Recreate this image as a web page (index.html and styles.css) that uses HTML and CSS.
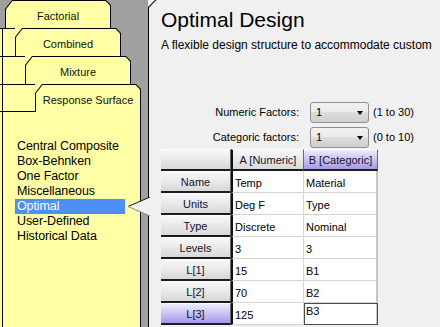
FILE: index.html
```html
<!DOCTYPE html>
<html lang="en">
<head>
    <meta charset="UTF-8">
    <title>Optimal Design</title>
    <link rel="stylesheet" href="styles.css">
</head>
<body>
    <div class="window">
        <aside class="sidebar">
            <div class="tab-row row-1">
                <div class="tab"><div class="tab-face">Factorial</div></div>
            </div>
            <div class="tab-row row-2">
                <div class="strip"></div>
                <div class="tab"><div class="tab-face">Combined</div></div>
            </div>
            <div class="tab-row row-3">
                <div class="strip"></div>
                <div class="tab"><div class="tab-face">Mixture</div></div>
            </div>
            <div class="tab-row row-4">
                <div class="strip"></div>
                <div class="tab"><div class="tab-face">Response Surface</div></div>
            </div>
            <div class="panel">
                <ul class="design-list">
                    <li>Central Composite</li>
                    <li>Box-Behnken</li>
                    <li>One Factor</li>
                    <li>Miscellaneous</li>
                    <li class="selected">Optimal</li>
                    <li>User-Defined</li>
                    <li>Historical Data</li>
                </ul>
            </div>
        </aside>

        <main class="content">
            <div class="content-inner">
                <h1 class="title">Optimal Design</h1>
                <p class="subtitle">A flexible design structure to accommodate custom</p>

                <div class="factors">
                    <div class="factor-row">
                        <span class="factor-label">Numeric Factors:</span>
                        <div class="select"><span>1</span><span class="caret"></span></div>
                        <span class="range">(1 to 30)</span>
                    </div>
                    <div class="factor-row">
                        <span class="factor-label">Categoric factors:</span>
                        <div class="select"><span>1</span><span class="caret"></span></div>
                        <span class="range">(0 to 10)</span>
                    </div>
                </div>

                <div class="grid">
                    <div class="hd"></div>
                    <div class="hd col-a">A [Numeric]</div>
                    <div class="hd on">B [Categoric]</div>

                    <div class="hd">Name</div>
                    <div class="cell col-a">Temp</div>
                    <div class="cell col-b">Material</div>

                    <div class="hd">Units</div>
                    <div class="cell col-a">Deg F</div>
                    <div class="cell col-b">Type</div>

                    <div class="hd">Type</div>
                    <div class="cell col-a">Discrete</div>
                    <div class="cell col-b">Nominal</div>

                    <div class="hd">Levels</div>
                    <div class="cell col-a">3</div>
                    <div class="cell col-b">3</div>

                    <div class="hd">L[1]</div>
                    <div class="cell col-a">15</div>
                    <div class="cell col-b">B1</div>

                    <div class="hd">L[2]</div>
                    <div class="cell col-a">70</div>
                    <div class="cell col-b">B2</div>

                    <div class="hd on">L[3]</div>
                    <div class="cell col-a">125</div>
                    <div class="cell col-b editing">B3</div>
                </div>
            </div>
        </main>

        <svg class="pointer" width="23" height="19" viewBox="0 0 23 19">
            <polygon points="1,9.5 23,0 23,19" fill="#f0f0f0"/>
            <line x1="1" y1="9.5" x2="23" y2="0" stroke="#1a1a1a"/>
            <line x1="1" y1="9.5" x2="23" y2="19" stroke="#8a8a8a"/>
        </svg>
    </div>
</body>
</html>
```

FILE: styles.css
```css
body { margin: 0; font-family: "Liberation Sans", Arial, sans-serif; background: #f0f0f0; color: #000; }

.window {
    position: relative;
    display: flex;
    width: 440px;
    height: 327px;
    overflow: hidden;
}

/* left side: stacked tabs + design list */
.sidebar {
    width: 148px;
    flex-shrink: 0;
    background: #a0a0a0;
    display: flex;
    flex-direction: column;
}
.tab-row { display: flex; height: 28px; flex-shrink: 0; }
.row-1 { padding-left: 5px; }
.row-2 { background: linear-gradient(to right, #ffffa6 111px, transparent 111px); }
.row-3 { background: linear-gradient(to right, #ffffa6 121px, transparent 121px); }
.row-4 { background: linear-gradient(to right, #ffffa6 131px, transparent 131px); }

.strip {
    flex-shrink: 0;
    box-sizing: border-box;
    border-top: 1px solid #000;
    background: linear-gradient(to right, #ffffa6 2px, #000 2px, #000 3px, #ffffa6 3px);
}
.row-2 .strip { width: 15px; }
.row-3 .strip { width: 25px; }
.row-4 .strip { width: 35px; border-bottom: 1px solid #000; }

.tab {
    width: 106px;
    flex-shrink: 0;
    background: #000;
    clip-path: polygon(7px 0, calc(100% - 5px) 0, 100% 5px, 100% 100%, 0 100%, 0 9px);
}
.tab-face {
    margin: 1px 1px 0;
    height: 27px;
    box-sizing: border-box;
    padding-top: 9px;
    background: #ffffa6;
    clip-path: polygon(6.5px 0, calc(100% - 4.4px) 0, 100% 4.4px, 100% 100%, 0 100%, 0 8.3px);
    text-align: center;
    font-size: 11px;
    line-height: 13px;
    color: #111;
    white-space: nowrap;
}

.panel {
    flex: 1;
    width: 141px;
    box-sizing: border-box;
    border-right: 1px solid #000;
    background: linear-gradient(to right, #ffffa6 2px, #000 2px, #000 3px, #ffffa6 3px);
    padding-top: 27px;
}
.design-list {
    list-style: none;
    margin: 0;
    padding: 0 0 0 15px;
    font-size: 12.5px;
    line-height: 15px;
    letter-spacing: -0.1px;
}
.design-list li { width: 110px; padding-left: 2px; box-sizing: border-box; white-space: nowrap; }
.design-list li.selected { background: #4d8ff5; color: #fff; }

/* right side */
.content {
    flex: 1;
    background: #000;
    clip-path: polygon(7px 0, 100% 0, 100% 100%, 0 100%, 0 7px);
}
.content-inner {
    margin-left: 1px;
    height: 100%;
    box-sizing: border-box;
    padding: 8px 0 0 12px;
    background: #f0f0f0;
    clip-path: polygon(7.4px 0, 100% 0, 100% 100%, 0 100%, 0 7.4px);
    overflow: hidden;
}
.title { margin: 0; font-size: 21px; line-height: 24px; font-weight: normal; }
.subtitle { margin: 6px 0 0; font-size: 12px; line-height: 14px; white-space: nowrap; }

.factors { margin-top: 50px; font-size: 11px; line-height: 13px; }
.factor-row { display: flex; align-items: center; height: 21px; }
.factor-row + .factor-row { margin-top: 4px; }
.factor-label { width: 138px; text-align: right; }
.select {
    margin-left: 11px;
    width: 59px;
    height: 21px;
    box-sizing: border-box;
    border: 1px solid #8e8f8f;
    border-radius: 3px;
    background: linear-gradient(#f2f2f2, #ebebeb 50%, #dddddd 50%, #cfcfcf);
    display: flex;
    align-items: center;
    justify-content: space-between;
    padding: 0 5px 0 5px;
}
.caret { border-left: 3.5px solid transparent; border-right: 3.5px solid transparent; border-top: 4px solid #000; }
.range { margin-left: 4px; }

.grid {
    margin-top: 1px;
    display: grid;
    grid-template-columns: 70px 73px 74px;
    grid-auto-rows: 22px;
    font-size: 11px;
    line-height: 13px;
}
.hd {
    display: flex;
    align-items: center;
    justify-content: center;
    box-sizing: border-box;
    padding-top: 1px;
    background: linear-gradient(#f8f8f8, #e9e9e9 50%, #d8d8d8);
    border-top: 1px solid #fdfdfd;
    border-right: 1px solid #6a6a6a;
    border-bottom: 2px solid #1c1c1c;
    color: #14142a;
    white-space: nowrap;
}
.hd.on { background: linear-gradient(#eeecfc, #c9c3f3 50%, #a39ae7); }
.col-a { border-left: 2px solid #111; }
.cell {
    box-sizing: border-box;
    background: #fff;
    border-right: 1px solid #d4d4d4;
    border-bottom: 1px solid #d4d4d4;
    padding: 6px 0 0 2px;
    white-space: nowrap;
}
.cell.col-b { border-right: 2px solid #c6c6c6; }
.cell.editing { outline: 1px solid #4a4a4a; outline-offset: -1px; padding-top: 2px; }

.pointer { position: absolute; left: 127px; top: 197px; }
```
